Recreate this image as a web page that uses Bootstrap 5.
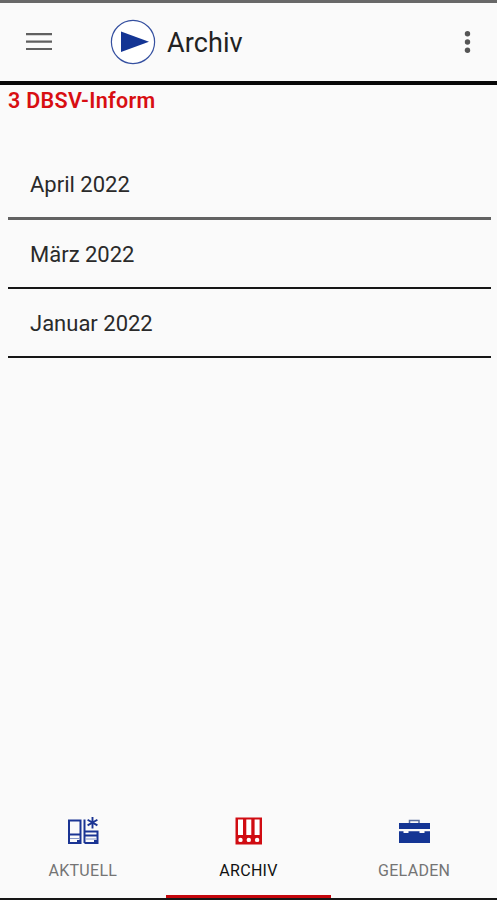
<!DOCTYPE html>
<html lang="de">
<head>
<meta charset="utf-8">
<meta name="viewport" content="width=device-width, initial-scale=1">
<title>Archiv</title>
<link href="https://cdn.jsdelivr.net/npm/bootstrap@5.3.0/dist/css/bootstrap.min.css" rel="stylesheet">
<style>
body{font-family:Roboto,sans-serif;background:#fafafa;color:#222;height:900px;overflow:hidden}
svg{display:block;flex:none}
.topbar{height:85px;border-top:3px solid #686868;border-bottom:4px solid #080808;padding:0 20px 0 26px}
.brand{margin-left:58px}
.app-title{font-size:27px;line-height:32px;margin:2px 0 0 11px;font-weight:400;letter-spacing:.1px}
.section-title{font-size:21.5px;line-height:26px;font-weight:600;color:#d80e12;padding:3px 0 0 8px;height:65px;letter-spacing:.3px}
.issues{margin:0 6px 0 8px}
.issues .list-group-item{height:69px;padding:0 22px;background:transparent;color:#2a2a2a;font-size:22px;line-height:69px;border:0;border-bottom:2px solid #161616;border-radius:0}
.issues .list-group-item:first-child{height:70px;border-bottom:3px solid #626262;line-height:70px}
.issues .list-group-item:last-child{border-bottom:2px solid #161616}
.tabbar{height:96px;border-bottom:2px solid #161616}
.tab{font-size:16px;line-height:20px;color:#747474;height:94px;padding-top:10px;letter-spacing:.3px}
.tab:hover{color:#747474}
.tab.active{color:#111;border-bottom:3px solid #c4060c}
.tab svg{margin-bottom:13px}
</style>
<script src="https://cdn.jsdelivr.net/npm/bootstrap@5.3.0/dist/js/bootstrap.bundle.min.js"></script>
</head>
<body class="d-flex flex-column">
<header class="topbar d-flex align-items-center flex-shrink-0">
  <button class="btn p-0 border-0 rounded-0" aria-label="Menü"><svg width="26" height="20" viewBox="0 0 26 20"><path d="M0 2.200h26M0 9.700h26M0 17h26" stroke="#606060" stroke-width="2.200"/></svg></button>
  <div class="brand d-flex align-items-center">
    <svg width="46" height="46" viewBox="0 0 46 46"><circle cx="23" cy="23" r="21.600" fill="#fff" stroke="#3550a0" stroke-width="1.200"/><path d="M11 12.500V33L39 22.700z" fill="#143594"/></svg>
    <h1 class="app-title mb-0">Archiv</h1>
  </div>
  <button class="btn p-0 border-0 ms-auto" aria-label="Mehr"><svg width="20" height="26" viewBox="0 0 20 26"><g fill="#555"><circle cx="10.500" cy="4.700" r="2.700"/><circle cx="10.500" cy="13" r="2.700"/><circle cx="10.500" cy="21.300" r="2.700"/></g></svg></button>
</header>
<main class="flex-grow-1">
  <h2 class="section-title mb-0">3 DBSV-Inform</h2>
  <div class="issues list-group list-group-flush">
    <a class="list-group-item">April 2022</a>
    <a class="list-group-item">März 2022</a>
    <a class="list-group-item">Januar 2022</a>
  </div>
</main>
<nav class="tabbar row g-0 flex-shrink-0">
  <a class="tab col d-flex flex-column align-items-center text-decoration-none">
    <svg width="32" height="34" viewBox="0 0 32 34"><g fill="none" stroke="#1a3493" stroke-width="2"><path d="M2 6.500h11.500V29H2zM2 20.500h11.500M17.500 5.500V29M17.500 17.500h13V29h-13M17.500 21.500h13"/><path d="M25.500 3v11.500M20.600 5.800l9.800 5.600M20.600 11.400l9.800-5.600" stroke-width="1.900"/><path d="M3 24.500h9M19 25h10" stroke="#8496c8" stroke-width="1.200"/></g><path d="M10 26h3v3h-3zM27 26h3v3h-3z" fill="#1a3493"/></svg>
    <span>AKTUELL</span>
  </a>
  <a class="tab active col d-flex flex-column align-items-center text-decoration-none">
    <svg width="28" height="34" viewBox="0 0 28 34"><path d="M.5 3.500h26.500v27H.5z" fill="#d00c12"/><g fill="#fff"><path d="M3 5.500h5v15.500H3zM11.300 5.500h5v15.500h-5zM19.600 5.500h5v15.500h-5z"/><circle cx="5.500" cy="25.900" r="2.200"/><circle cx="13.800" cy="25.900" r="2.200"/><circle cx="22.100" cy="25.900" r="2.200"/></g></svg>
    <span>ARCHIV</span>
  </a>
  <a class="tab col d-flex flex-column align-items-center text-decoration-none">
    <svg width="32" height="34" viewBox="0 0 32 34"><path d="M11.500 9.500V6.500h9.500v3" fill="none" stroke="#5c6f9f" stroke-width="1.500"/><path d="M1 9h31v6H1zM1 17.200h4.500v1.800h5v-1.800h11v1.800h5v-1.800H32V29H1z" fill="#143594"/></svg>
    <span>GELADEN</span>
  </a>
</nav>
</body>
</html>
